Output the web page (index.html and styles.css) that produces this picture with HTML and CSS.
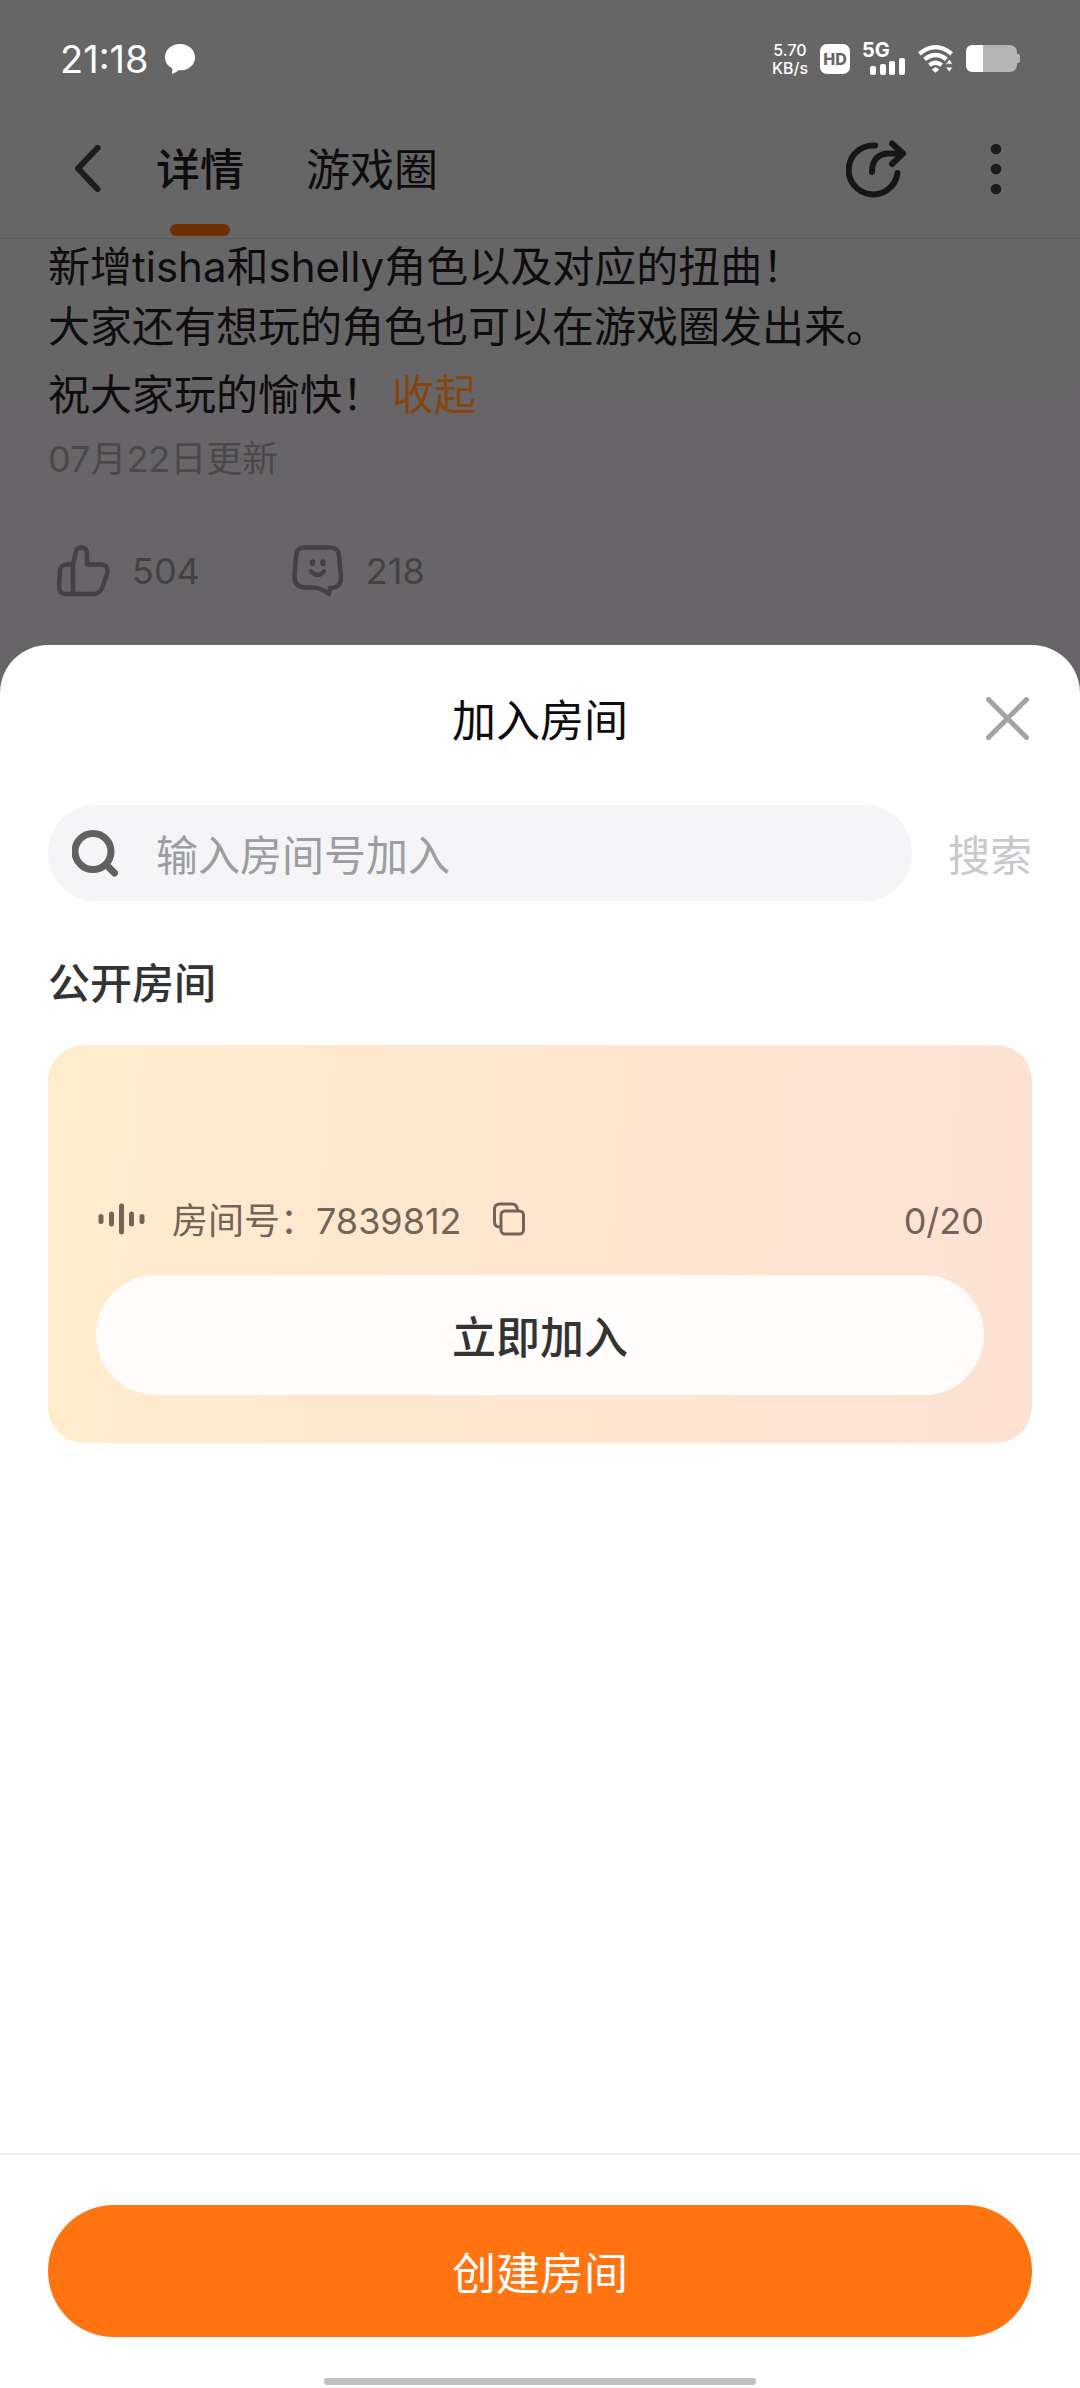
FILE: index.html
```html
<!DOCTYPE html>
<html lang="zh-CN">
<head>
<meta charset="utf-8">
<meta name="viewport" content="width=device-width, initial-scale=1">
<title>加入房间</title>
<link rel="stylesheet" href="styles.css">
</head>
<body class="screen">
  <div class="status">
    <div class="status-left">
      <span class="clock">21:18</span>
      <svg class="chat-icon" viewBox="0 0 30 30" aria-hidden="true"><path fill="#fff" d="M15 0C6.500 0 0 5.800 0 13.200c0 4.700 2.800 8.700 7 11.100.6 1.900.4 3.500-.1 4.800-.1.500.2.800.7.600 2.300-.8 4.400-2 5.800-3.400C23.200 27 30 21 30 13.200 30 5.800 23.500 0 15 0z"/></svg>
    </div>
    <div class="status-right">
      <div class="speed"><span>5.70</span><span>KB/s</span></div>
      <span class="hd">HD</span>
      <div class="signal">
        <span class="net">5G</span>
        <svg class="bars" viewBox="0 0 36 18" fill="#fff" aria-hidden="true"><rect x="0" y="9" width="6" height="9" rx="2"/><rect x="10" y="7" width="6" height="11" rx="2"/><rect x="19" y="4" width="6" height="14" rx="2"/><rect x="29" y="1" width="6" height="17" rx="2"/></svg>
      </div>
      <svg class="wifi" viewBox="0 0 38 30" fill="none" stroke="#fff" stroke-width="4.500" aria-hidden="true"><path d="M1.500 9.500Q18.500-4.500 35.500 9.500"/><path d="M7 15.500Q18.500 6 30 15.500"/><path d="M12 21.500Q18.500 16.500 25 21.500"/><path d="M14.500 26L18.500 23.500 22.500 26 18.500 29.500z" fill="#fff" stroke="none"/><path d="M33 15l4 5.500h-8zM33 29l4-5.500h-8z" fill="#fff" stroke="#666" stroke-width="1"/></svg>
      <svg class="battery" viewBox="0 0 54 28" aria-hidden="true"><rect x="0" y="0" width="51" height="27" rx="7" fill="#b5b5b5"/><path d="M51 9h1q2 0 2 2v5q0 2-2 2h-1z" fill="#b5b5b5"/><path d="M7 0h10v27H7q-7 0-7-7V7q0-7 7-7z" fill="#fff"/></svg>
    </div>
  </div>

  <header class="header">
    <button class="icon-btn back" type="button" aria-label="返回"><svg width="28" height="48" viewBox="0 0 28 48" fill="none" stroke="#1c1c1c" stroke-width="6" stroke-linecap="round" stroke-linejoin="round"><path d="M23.500 3L4 23.500 23.500 44"/></svg></button>
    <nav class="tabs">
      <a class="tab tab-active" href="#detail">详情</a>
      <a class="tab" href="#circle">游戏圈</a>
    </nav>
    <button class="icon-btn share" type="button" aria-label="分享"><svg width="62" height="60" viewBox="0 0 62 60" fill="none" stroke="#161616" stroke-width="6" stroke-linecap="round" stroke-linejoin="round"><path d="M29 6.500A24.500 24.500 0 1 0 51.500 34"/><path d="M26 33C26 21 32 14.500 43 14.500H56"/><path d="M46 4.500L57 14.500 46 25"/></svg></button>
    <button class="icon-btn more" type="button" aria-label="更多"><svg width="12" height="52" viewBox="0 0 12 52" fill="#1c1c1c"><circle cx="6" cy="6" r="5.300"/><circle cx="6" cy="26" r="5.300"/><circle cx="6" cy="46" r="5.300"/></svg></button>
  </header>

  <main class="post">
    <p class="line">新增tisha和shelly角色以及对应的扭曲！</p>
    <p class="line">大家还有想玩的角色也可以在游戏圈发出来。</p>
    <p class="line line-last">祝大家玩的愉快！<a class="fold" href="#fold">收起</a></p>
    <p class="date">07月22日更新</p>
    <div class="reactions">
      <button class="reaction" type="button"><svg width="54" height="52" viewBox="0 0 54 52" fill="none" stroke="#434143" stroke-width="4.500" stroke-linejoin="round"><path d="M17 19.500H11Q4.500 19.500 4 26L3 41Q3 49 10 49H37Q44 49 46.500 42L51 29Q53 20 45 19.500H31V9Q31 2.500 25 2.500 20.500 2.500 19.500 8L17 19.500V49"/></svg>504</button>
      <button class="reaction" type="button"><svg width="52" height="52" viewBox="0 0 52 52" fill="none" stroke="#434143" stroke-width="4.500" stroke-linejoin="round"><path d="M12 2.500H38Q46.500 2.500 47 11L49 32Q49 42 40 43L38 43 37 49Q29 43 22 42.500H13Q2.500 42 2.500 32L4 11Q4.500 2.500 12 2.500z"/><path d="M20.500 17v1.500M31 17v1.500" stroke-width="5.500" stroke-linecap="round"/><path d="M19 26.500Q25.500 33.500 32 26.500" stroke-linecap="round"/></svg>218</button>
    </div>
  </main>

  <section class="sheet" role="dialog" aria-labelledby="sheet-title">
    <div class="sheet-head">
      <h1 class="sheet-title" id="sheet-title">加入房间</h1>
      <button class="icon-btn close" type="button" aria-label="关闭"><svg width="44" height="44" viewBox="0 0 44 44" stroke="#a3a2a5" stroke-width="5" stroke-linecap="round"><path d="M2.500 2.500L40.500 40.500M40.500 2.500L2.500 40.500"/></svg></button>
    </div>

    <form class="search">
      <label class="search-box">
        <svg width="48" height="48" viewBox="0 0 48 48" fill="none" stroke="#616161" stroke-width="7" aria-hidden="true"><circle cx="21" cy="22.500" r="18"/><path d="M35 36.500L42.500 44" stroke-linecap="round"/></svg>
        <input class="search-input" type="text" placeholder="输入房间号加入" aria-label="输入房间号加入">
      </label>
      <button class="search-btn" type="button">搜索</button>
    </form>

    <h2 class="section-title">公开房间</h2>

    <article class="room">
      <div class="room-info">
        <svg class="wave" width="48" height="32" viewBox="0 0 48 32" fill="none" stroke="#73645a" stroke-width="5" stroke-linecap="round" aria-hidden="true"><path d="M3 13.500v5M13.500 11v10M23.500 3v26M33.500 11v10M44 13.500v5"/></svg>
        <span class="room-text">房间号：7839812</span>
        <button class="icon-btn copy" type="button" aria-label="复制房间号"><svg width="34" height="34" viewBox="0 0 34 34" fill="none" stroke="#73645a" stroke-width="3" stroke-linejoin="round"><path d="M9 25H8Q2.500 25 2.500 20V7Q2.500 2 8 2H20Q25 2 25.500 8"/><rect x="9" y="9" width="22.500" height="23" rx="4"/></svg></button>
        <span class="room-text room-count">0/20</span>
      </div>
      <button class="join" type="button">立即加入</button>
    </article>

    <footer class="footer">
      <button class="create" type="button">创建房间</button>
      <div class="home-bar"></div>
    </footer>
  </section>
</body>
</html>
```

FILE: styles.css
```css
* { box-sizing: border-box; }

html { background: #676567; }

.screen {
  margin: 0;
  min-height: 100vh;
  display: flex;
  flex-direction: column;
  font-family: Inter, "Noto Sans CJK SC", sans-serif;
  font-size: 42px;
  background: linear-gradient(#666 240px, #676567 420px);
  color: #0e0c0e;
}

h1, h2, p { margin: 0; font-weight: 400; }

button, input {
  font: inherit;
  color: inherit;
  border: 0;
  padding: 0;
  background: none;
}

svg { display: block; flex: none; }

a { color: inherit; text-decoration: none; }

.icon-btn { display: flex; flex: none; }

/* Status bar */
.status {
  height: 118px;
  padding: 0 60px;
  display: flex;
  align-items: center;
  justify-content: space-between;
  color: #fff;
}

.status-left { display: flex; align-items: center; gap: 16px; }
.clock { font-size: 38px; }
.chat-icon { width: 30px; height: 30px; }

.status-right { display: flex; align-items: center; gap: 12px; }

.speed {
  display: flex;
  flex-direction: column;
  align-items: center;
  font-size: 16px;
  line-height: 18px;
  font-weight: 500;
}

.hd {
  width: 30px;
  height: 30px;
  border-radius: 7px;
  background: #fff;
  color: #666;
  font-size: 16px;
  line-height: 30px;
  font-weight: 800;
  text-align: center;
}

.signal { display: flex; flex-direction: column; width: 44px; }
.net { font-size: 20px; line-height: 14px; font-weight: 700; }
.bars { width: 36px; height: 18px; align-self: flex-end; }
.wifi { width: 36px; height: 30px; }
.battery { width: 54px; height: 28px; }

/* Header */
.header {
  padding: 0 78px 18px 74px;
  border-bottom: 1px solid #5e5e5e;
  display: flex;
  align-items: center;
}

.tabs { flex: 1; display: flex; gap: 62px; padding-left: 54px; }

.tab {
  position: relative;
  padding-top: 2px;
  font-size: 44px;
  line-height: 100px;
}

.tab-active { font-weight: 500; }

.tab-active::after {
  content: "";
  position: absolute;
  left: 50%;
  bottom: -16px;
  width: 60px;
  height: 12px;
  margin-left: -30px;
  border-radius: 6px;
  background: #703006;
}

.share { margin-right: 82px; }

/* Post */
.post { padding: 2px 48px 48px; }
.line { line-height: 52px; margin-bottom: 8px; }
.line-last { margin: 16px 0 12px; }
.fold { color: #86450f; margin-left: 8px; }
.date { font-size: 36px; line-height: 52px; color: #4a484a; }

.reactions { display: flex; gap: 92px; margin-top: 60px; padding-left: 8px; }

.reaction {
  display: flex;
  align-items: center;
  gap: 22px;
  font-size: 36px;
  line-height: 52px;
  color: #434143;
}

/* Bottom sheet */
.sheet {
  flex: 1;
  display: flex;
  flex-direction: column;
  border-radius: 48px 48px 0 0;
  background: #fefefe;
}

.sheet-head {
  display: grid;
  grid-template-columns: 44px 1fr 44px;
  align-items: center;
  padding: 42px 50px 54px;
}

.sheet-title {
  grid-column: 2;
  padding-top: 4px;
  font-size: 44px;
  line-height: 60px;
  text-align: center;
}

.search { display: flex; align-items: center; gap: 36px; padding: 0 48px; }

.search-box {
  flex: 1;
  min-width: 0;
  height: 96px;
  padding: 0 24px;
  display: flex;
  align-items: center;
  gap: 36px;
  border-radius: 48px;
  background: #f5f4f7;
}

.search-input { flex: 1; min-width: 0; height: 64px; padding-top: 4px; outline: 0; color: #333; }
.search-input::placeholder { color: #9c9da0; opacity: 1; }
.search-btn { color: #c9c8cc; line-height: 60px; padding-top: 6px; }

.section-title {
  margin: 54px 48px 32px;
  font-size: 42px;
  line-height: 58px;
  font-weight: 500;
  color: #333;
}

.room {
  margin: 0 48px;
  padding: 148px 48px 48px;
  border-radius: 36px;
  background: linear-gradient(95deg, #feedcd, #fee6d0 50%, #fde2d4);
}

.room-info {
  display: flex;
  align-items: center;
  font-size: 36px;
  line-height: 48px;
  color: #73645a;
}

.room-text { padding-top: 4px; }
.wave { margin: 0 26px 0 2px; }
.copy { margin-left: 30px; }
.room-count { margin-left: auto; }

.join, .create {
  display: block;
  width: 100%;
  font-size: 44px;
  border-radius: 66px;
}

.join {
  margin-top: 30px;
  height: 120px;
  background: #fffcfb;
  color: #333;
  font-weight: 500;
}

.footer {
  margin-top: auto;
  padding: 50px 48px 3px;
  border-top: 2px solid #eeecee;
}

.create { height: 132px; background: #ff7410; color: #fff; }

.home-bar {
  width: 44%;
  height: 7px;
  margin: 41px auto 0;
  border-radius: 3px;
  background: #c0c0c0;
}
```
